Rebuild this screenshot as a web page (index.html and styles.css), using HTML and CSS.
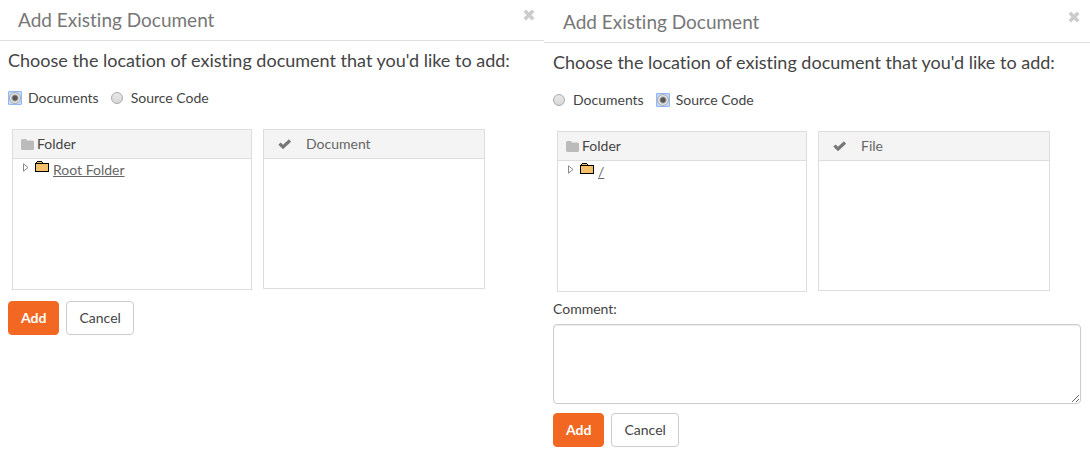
FILE: index.html
```html
<!DOCTYPE html>
<html lang="en">
<head>
<meta charset="utf-8">
<title>Add Existing Document</title>
<link rel="stylesheet" href="styles.css">
</head>
<body>
<svg class="sprite" aria-hidden="true">
  <symbol id="close" viewBox="0 0 12 12"><path d="M1.800 1.800l8.400 8.400M10.200 1.800l-8.400 8.400" fill="none" stroke="currentColor" stroke-width="3.600"/></symbol>
  <symbol id="folder" viewBox="0 0 13 11"><path d="M0 1.500Q0 0 1.500 0H4.500Q6 0 6 1.500H11.500Q13 1.500 13 3V9.500Q13 11 11.500 11H1.500Q0 11 0 9.500z" fill="currentColor"/></symbol>
  <symbol id="check" viewBox="0 0 14 10"><path d="M1.500 4.700L5 8L12 1.500" fill="none" stroke="currentColor" stroke-width="3.200"/></symbol>
  <symbol id="arrow" viewBox="0 0 6 9"><path d="M.5.800v7.400L5 4.500z" fill="#fff" stroke="#888"/></symbol>
  <symbol id="tree-folder" viewBox="0 0 14 12"><path d="M0 2h14v9H0zM1 1h7v2H1zM2 0h5v2H2z" fill="#000"/><path d="M1 3h12v7H1zM2 1h5v1H2z" fill="#f4c06c"/></symbol>
</svg>
<main class="page">
  <section class="dialog">
    <header class="dialog-header">
      <h2 class="title">Add Existing Document</h2>
      <button class="close" type="button" aria-label="Close"><svg class="close-icon"><use href="#close"/></svg></button>
    </header>
    <form class="dialog-body">
      <p class="prompt">Choose the location of existing document that you'd like to add:</p>
      <div class="choices">
        <label class="choice"><input class="radio" type="radio" name="source" checked>Documents</label>
        <label class="choice"><input class="radio" type="radio" name="source">Source Code</label>
      </div>
      <div class="panels">
        <div class="panel">
          <div class="panel-header"><svg class="folder-icon"><use href="#folder"/></svg>Folder</div>
          <div class="tree-row"><svg class="arrow-icon"><use href="#arrow"/></svg><svg class="tree-icon"><use href="#tree-folder"/></svg><a class="tree-link" href="#">Root Folder</a></div>
        </div>
        <div class="panel panel-files">
          <div class="panel-header files-header"><svg class="check-icon"><use href="#check"/></svg>Document</div>
        </div>
      </div>
      <div class="actions">
        <button class="btn btn-primary" type="submit">Add</button>
        <button class="btn" type="button">Cancel</button>
      </div>
    </form>
  </section>
  <section class="dialog dialog-code">
    <header class="dialog-header">
      <h2 class="title">Add Existing Document</h2>
      <button class="close" type="button" aria-label="Close"><svg class="close-icon"><use href="#close"/></svg></button>
    </header>
    <form class="dialog-body">
      <p class="prompt">Choose the location of existing document that you'd like to add:</p>
      <div class="choices">
        <label class="choice"><input class="radio" type="radio" name="source">Documents</label>
        <label class="choice"><input class="radio" type="radio" name="source" checked>Source Code</label>
      </div>
      <div class="panels">
        <div class="panel">
          <div class="panel-header"><svg class="folder-icon"><use href="#folder"/></svg>Folder</div>
          <div class="tree-row"><svg class="arrow-icon"><use href="#arrow"/></svg><svg class="tree-icon"><use href="#tree-folder"/></svg><a class="tree-link" href="#">/</a></div>
        </div>
        <div class="panel panel-files">
          <div class="panel-header files-header"><svg class="check-icon"><use href="#check"/></svg>File</div>
        </div>
      </div>
      <label class="comment-label" for="comment">Comment:</label>
      <textarea class="comment" id="comment"></textarea>
      <div class="actions">
        <button class="btn btn-primary" type="submit">Add</button>
        <button class="btn" type="button">Cancel</button>
      </div>
    </form>
  </section>
</main>
</body>
</html>
```
FILE: styles.css
```css
*, *::before { box-sizing: border-box; }
body {
  margin: 0;
  background: #fff;
  color: #444;
  font: 14px/20px Lato, "Liberation Sans", sans-serif;
  font-variant-ligatures: none;
}
.sprite { display: none; }
.page { display: grid; grid-template-columns: 544fr 546fr; }
.dialog-code { padding-top: 2px; }
.dialog-header {
  display: flex;
  align-items: flex-start;
  justify-content: space-between;
  height: 41px;
  padding: 8px 9px 0 18px;
  border-bottom: 1px solid #e0e0e0;
}
.dialog-code .dialog-header { padding-left: 19px; padding-right: 10px; }
.title { margin: 0; color: #777; font-size: 19px; line-height: 24px; font-weight: 400; }
.close { display: flex; padding: 0; margin-top: 1px; border: 0; background: none; color: #ccc; }
.close-icon { width: 12px; height: 12px; }
.dialog-body { padding: 7px 8px; }
.dialog-code .dialog-body { padding: 7px 9px; }
.prompt { margin: 0; font-size: 18px; line-height: 24px; }
.choices { display: flex; gap: 12px; margin-top: 16px; }
.choice { display: flex; align-items: center; gap: 6px; }
.radio {
  appearance: none;
  width: 12px;
  height: 12px;
  margin: 0 2px 0 0;
  border: 1px solid #aaa;
  border-radius: 50%;
  background: linear-gradient(#e8e8e8, #d8d8d8);
}
.radio:checked {
  display: grid;
  width: 14px;
  height: 14px;
  margin: 0;
  border-color: #8fb8fa;
  border-radius: 1px;
  background: #c4d9fd;
}
.radio:checked::before {
  content: "";
  width: 12px;
  height: 12px;
  border: 1px solid #aaa;
  border-radius: 50%;
  background: radial-gradient(circle, #555 2px, #e4e4e4 4px);
}
.panels {
  display: grid;
  grid-template-columns: 240fr 222fr 40fr;
  column-gap: 11px;
  margin-top: 21px;
  padding-left: 4px;
}
.dialog-code .panels { grid-template-columns: 250fr 232fr 20fr; }
.panel { min-height: 161px; border: 1px solid #ddd; }
.panel-files { min-height: 160px; margin-bottom: 1px; }
.panel-header {
  display: flex;
  align-items: center;
  gap: 3px;
  height: 29px;
  padding: 0 8px;
  border-bottom: 1px solid #ddd;
  background: #f4f4f4;
}
.files-header { gap: 14px; padding-left: 14px; color: #666; }
.folder-icon { width: 13px; height: 11px; color: #bbb; }
.check-icon { width: 14px; height: 10px; color: #777; }
.tree-row { display: flex; align-items: flex-start; padding: 1px 10px; }
.arrow-icon { width: 6px; height: 9px; margin-top: 3px; }
.tree-icon { width: 14px; height: 12px; margin: 1px 4px 0 6px; }
.tree-link { color: #666; text-decoration: underline; }
.comment-label { display: block; margin-top: 7px; }
.comment {
  display: block;
  width: 100%;
  height: 80px;
  margin-top: 5px;
  padding: 6px 12px;
  border: 1px solid #ccc;
  border-radius: 4px;
  box-shadow: inset 0 1px 1px rgba(0, 0, 0, .075);
  font: inherit;
  resize: vertical;
}
.actions { display: flex; gap: 7px; margin-top: 11px; }
.comment + .actions { margin-top: 9px; }
.btn {
  padding: 6px 12px;
  border: 1px solid #ccc;
  border-radius: 4px;
  background: #fff;
  color: #444;
  font: inherit;
}
.btn-primary { border-color: #f26822; background: #f26822; color: #fff; font-weight: 700; }
```
